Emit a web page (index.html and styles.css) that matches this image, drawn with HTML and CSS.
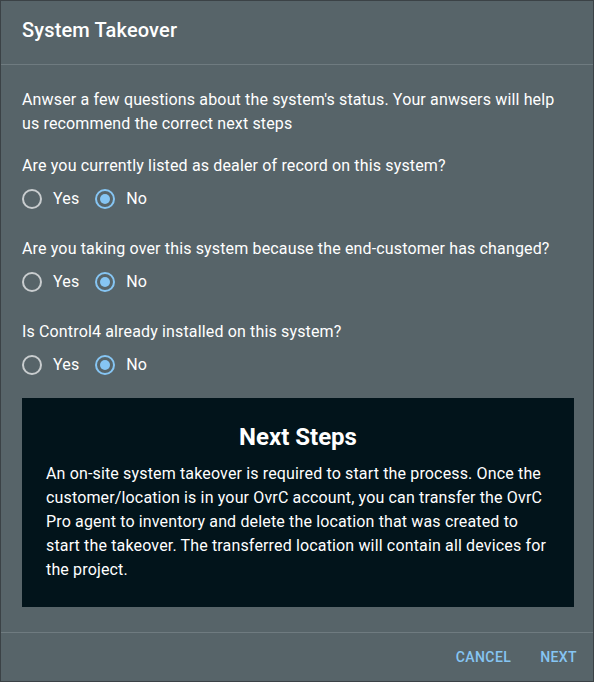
FILE: index.html
```html
<!DOCTYPE html>
<html lang="en">
<head>
<meta charset="utf-8">
<title>System Takeover</title>
<link rel="stylesheet" href="styles.css">
</head>
<body>
<div class="dialog">
  <div class="dialog-header">
    <h2 class="dialog-title">System Takeover</h2>
  </div>
  <div class="dialog-body">
    <p class="intro">Anwser a few questions about the system's status. Your anwsers will help us recommend the correct next steps</p>

    <div class="question">
      <div class="question-label">Are you currently listed as dealer of record on this system?</div>
      <div class="radio-row">
        <label class="radio"><span class="radio-circle"></span><span class="radio-text">Yes</span></label>
        <label class="radio checked"><span class="radio-circle"></span><span class="radio-text">No</span></label>
      </div>
    </div>

    <div class="question">
      <div class="question-label">Are you taking over this system because the end-customer has changed?</div>
      <div class="radio-row">
        <label class="radio"><span class="radio-circle"></span><span class="radio-text">Yes</span></label>
        <label class="radio checked"><span class="radio-circle"></span><span class="radio-text">No</span></label>
      </div>
    </div>

    <div class="question">
      <div class="question-label">Is Control4 already installed on this system?</div>
      <div class="radio-row">
        <label class="radio"><span class="radio-circle"></span><span class="radio-text">Yes</span></label>
        <label class="radio checked"><span class="radio-circle"></span><span class="radio-text">No</span></label>
      </div>
    </div>

    <div class="next-steps">
      <h3 class="next-title">Next Steps</h3>
      <p class="next-text">An on-site system takeover is required to start the process. Once the customer/location is in your OvrC account, you can transfer the OvrC Pro agent to inventory and delete the location that was created to start the takeover. The transferred location will contain all devices for the project.</p>
    </div>
  </div>
  <div class="dialog-actions">
    <button class="btn">Cancel</button>
    <button class="btn">Next</button>
  </div>
</div>
</body>
</html>
```

FILE: styles.css
```css
* { box-sizing: border-box; }

html, body {
  margin: 0;
  padding: 0;
  background: #3b4246;
}

body {
  font-family: Roboto, "Liberation Sans", Arial, sans-serif;
  color: #ffffff;
}

.dialog {
  width: 594px;
  height: 682px;
  border: 1px solid #3b4246;
  background: #576469;
  display: flex;
  flex-direction: column;
}

.dialog-header {
  padding: 15px 21px 20px;
  border-bottom: 1px solid #6f7b80;
}

.dialog-title {
  margin: 0;
  font-size: 20px;
  font-weight: 500;
  line-height: 28px;
  letter-spacing: 0.15px;
}

.dialog-body {
  flex: 1;
  padding: 23px 19px 24px 21px;
  display: flex;
  flex-direction: column;
}

.intro {
  margin: 0 0 18px;
  font-size: 16px;
  line-height: 24px;
  letter-spacing: 0.15px;
}

.question {
  margin-bottom: 17px;
}

.question:nth-of-type(3) {
  margin-bottom: 12px;
}

.question-label {
  font-size: 16px;
  line-height: 24px;
  letter-spacing: 0.15px;
}

.radio-row {
  height: 42px;
  display: flex;
  align-items: center;
  gap: 16px;
}

.radio {
  display: flex;
  align-items: center;
  gap: 11px;
  font-size: 16px;
  line-height: 24px;
  letter-spacing: 0.15px;
}

.radio-circle {
  width: 20px;
  height: 20px;
  border: 2px solid #c9cdcf;
  border-radius: 50%;
  display: flex;
  align-items: center;
  justify-content: center;
}

.radio.checked .radio-circle {
  border-color: #86c5f3;
}

.radio.checked .radio-circle::after {
  content: "";
  width: 10px;
  height: 10px;
  border-radius: 50%;
  background: #86c5f3;
}

.next-steps {
  background: #02141b;
  padding: 23px 24px 25px;
}

.next-title {
  margin: 0 0 9px;
  text-align: center;
  font-size: 24px;
  font-weight: 700;
  line-height: 32px;
}

.next-text {
  margin: 0;
  font-size: 16px;
  line-height: 24px;
  letter-spacing: 0.15px;
}

.dialog-actions {
  height: 49px;
  border-top: 1px solid #6f7b80;
  display: flex;
  align-items: center;
  justify-content: flex-end;
  gap: 13px;
  padding-right: 8px;
}

.btn {
  background: none;
  border: none;
  padding: 6px 8px;
  font-family: Roboto, "Liberation Sans", Arial, sans-serif;
  font-size: 14px;
  font-weight: 500;
  letter-spacing: 0.4px;
  line-height: 24px;
  text-transform: uppercase;
  color: #86c5f3;
  cursor: pointer;
}
```
